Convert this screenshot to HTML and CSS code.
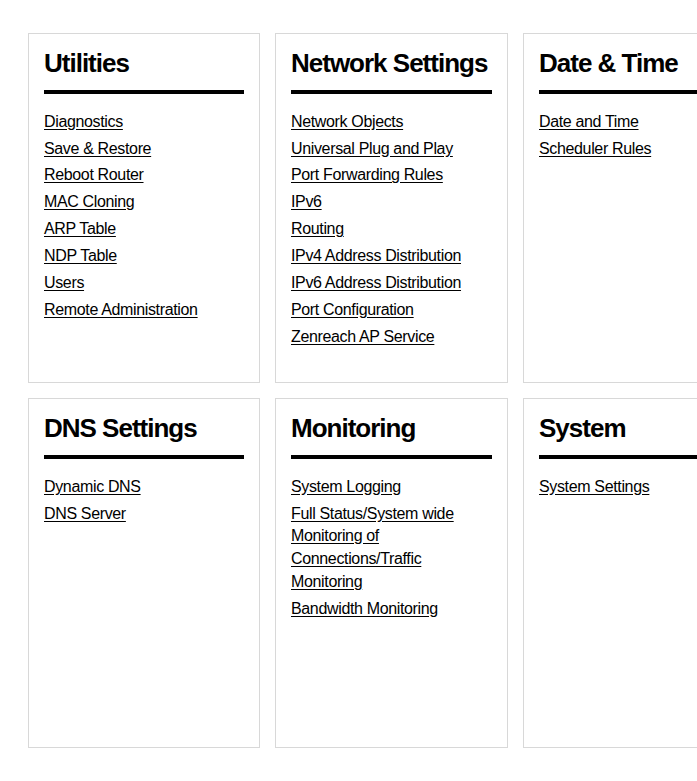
FILE: index.html
```html
<!DOCTYPE html>
<html lang="en">
<head>
<meta charset="utf-8">
<title>Advanced</title>
<link rel="stylesheet" href="styles.css">
</head>
<body>
<main class="page">
  <div class="grid">
    <section class="card">
      <h2 class="card-title">Utilities</h2>
      <ul class="links">
        <li><a href="#">Diagnostics</a></li>
        <li><a href="#">Save &amp; Restore</a></li>
        <li><a href="#">Reboot Router</a></li>
        <li><a href="#">MAC Cloning</a></li>
        <li><a href="#">ARP Table</a></li>
        <li><a href="#">NDP Table</a></li>
        <li><a href="#">Users</a></li>
        <li><a href="#">Remote Administration</a></li>
      </ul>
    </section>
    <section class="card">
      <h2 class="card-title">Network Settings</h2>
      <ul class="links">
        <li><a href="#">Network Objects</a></li>
        <li><a href="#">Universal Plug and Play</a></li>
        <li><a href="#">Port Forwarding Rules</a></li>
        <li><a href="#">IPv6</a></li>
        <li><a href="#">Routing</a></li>
        <li><a href="#">IPv4 Address Distribution</a></li>
        <li><a href="#">IPv6 Address Distribution</a></li>
        <li><a href="#">Port Configuration</a></li>
        <li><a href="#">Zenreach AP Service</a></li>
      </ul>
    </section>
    <section class="card">
      <h2 class="card-title">Date &amp; Time</h2>
      <ul class="links">
        <li><a href="#">Date and Time</a></li>
        <li><a href="#">Scheduler Rules</a></li>
      </ul>
    </section>
    <section class="card">
      <h2 class="card-title">DNS Settings</h2>
      <ul class="links">
        <li><a href="#">Dynamic DNS</a></li>
        <li><a href="#">DNS Server</a></li>
      </ul>
    </section>
    <section class="card">
      <h2 class="card-title">Monitoring</h2>
      <ul class="links">
        <li><a href="#">System Logging</a></li>
        <li><a href="#">Full Status/System wide Monitoring of Connections/Traffic Monitoring</a></li>
        <li><a href="#">Bandwidth Monitoring</a></li>
      </ul>
    </section>
    <section class="card">
      <h2 class="card-title">System</h2>
      <ul class="links">
        <li><a href="#">System Settings</a></li>
      </ul>
    </section>
  </div>
</main>
</body>
</html>
```
FILE: styles.css
```css
html, body {
  margin: 0;
  padding: 0;
  background: #ffffff;
  overflow: hidden;
}

body {
  font-family: "Liberation Sans", Arial, sans-serif;
  color: #000000;
}

.page {
  padding: 33px 0 0 28px;
  width: 760px;
}

.grid {
  display: grid;
  grid-template-columns: 232px 233px 232px;
  grid-auto-rows: 350px;
  column-gap: 15px;
  row-gap: 15px;
}

.card {
  border: 1px solid #d8d8d8;
  padding: 15px;
  box-sizing: border-box;
  min-width: 0;
}

.card-title {
  margin: 0 0 16.7px 0;
  padding: 0 0 13px 0;
  border-bottom: 4px solid #000000;
  font-size: 26px;
  line-height: 28px;
  font-weight: 700;
  letter-spacing: -1px;
  white-space: nowrap;
}

.links {
  list-style: none;
  margin: 0;
  padding: 0;
  display: flex;
  flex-direction: column;
  gap: 4px;
}

.links li {
  font-size: 16px;
  line-height: 22.86px;
  letter-spacing: -0.35px;
}

.links a {
  color: #000000;
  text-decoration: underline;
  text-underline-offset: 2px;
}
```
